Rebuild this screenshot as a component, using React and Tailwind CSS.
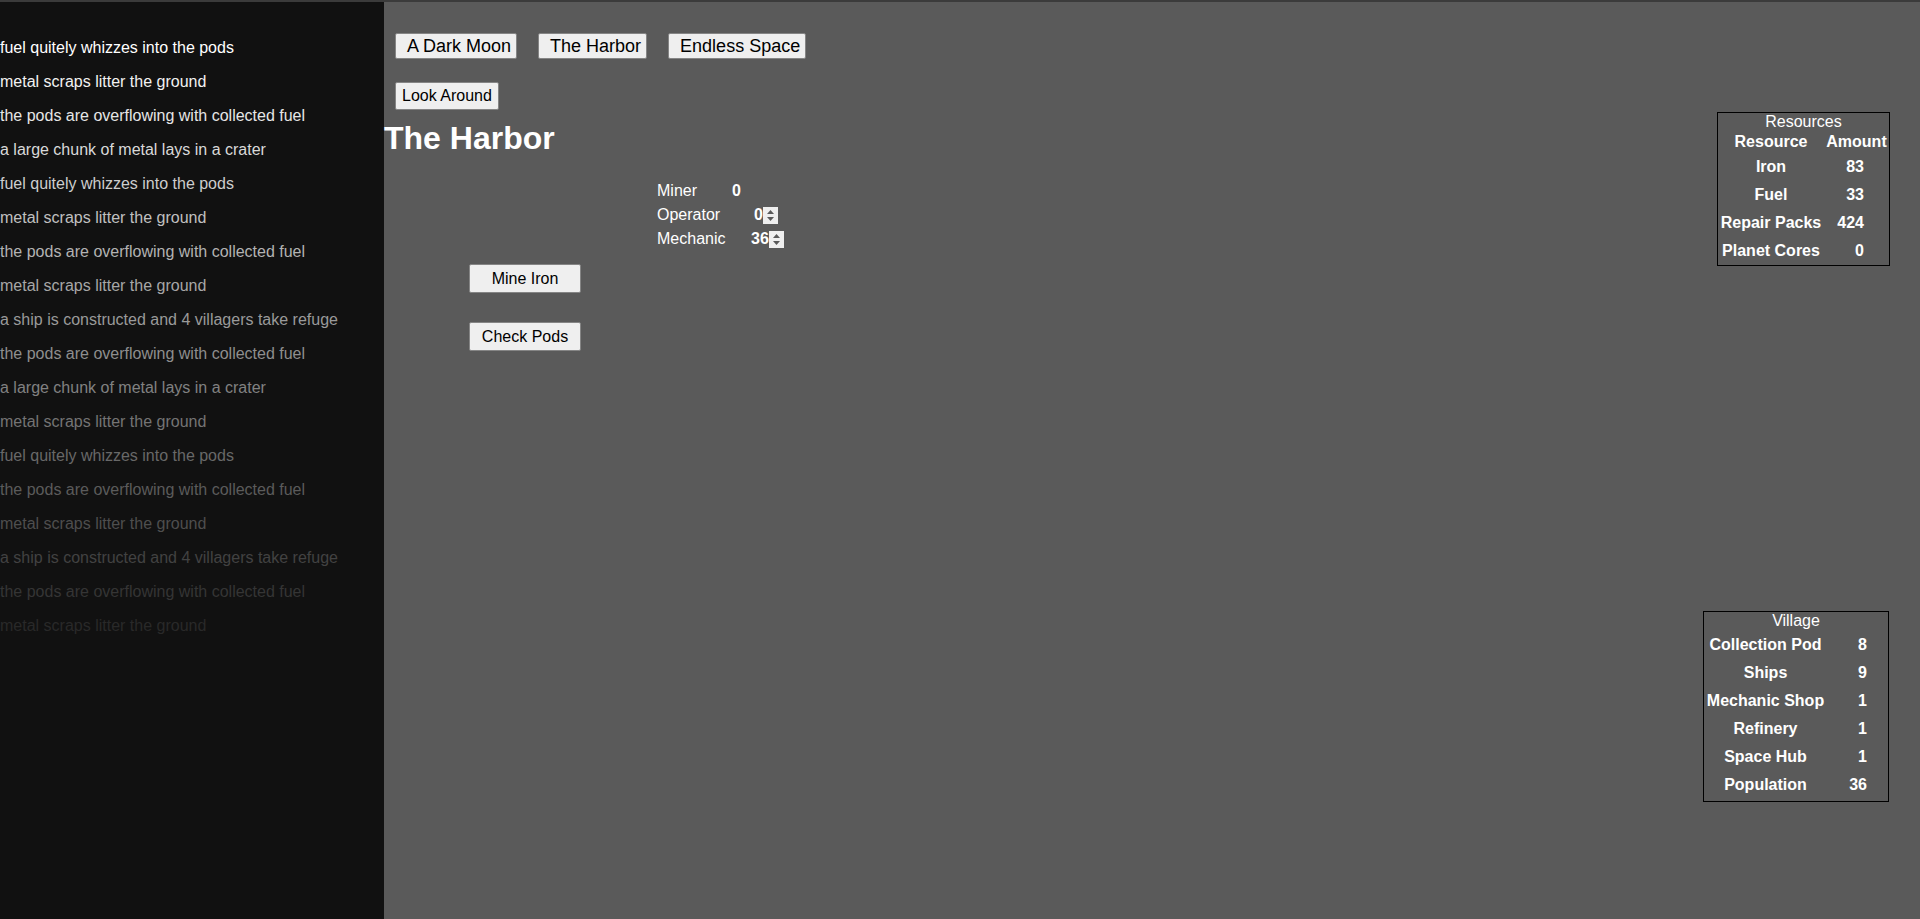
import React from "react";

const logLines = [
  { text: "fuel quitely whizzes into the pods", color: "text-[#ffffff]" },
  { text: "metal scraps litter the ground", color: "text-[#f2f2f2]" },
  { text: "the pods are overflowing with collected fuel", color: "text-[#e6e6e6]" },
  { text: "a large chunk of metal lays in a crater", color: "text-[#d9d9d9]" },
  { text: "fuel quitely whizzes into the pods", color: "text-[#cdcdcd]" },
  { text: "metal scraps litter the ground", color: "text-[#c0c0c0]" },
  { text: "the pods are overflowing with collected fuel", color: "text-[#b3b3b3]" },
  { text: "metal scraps litter the ground", color: "text-[#a7a7a7]" },
  { text: "a ship is constructed and 4 villagers take refuge", color: "text-[#9a9a9a]" },
  { text: "the pods are overflowing with collected fuel", color: "text-[#8e8e8e]" },
  { text: "a large chunk of metal lays in a crater", color: "text-[#818181]" },
  { text: "metal scraps litter the ground", color: "text-[#747474]" },
  { text: "fuel quitely whizzes into the pods", color: "text-[#686868]" },
  { text: "the pods are overflowing with collected fuel", color: "text-[#5b5b5b]" },
  { text: "metal scraps litter the ground", color: "text-[#4e4e4e]" },
  { text: "a ship is constructed and 4 villagers take refuge", color: "text-[#424242]" },
  { text: "the pods are overflowing with collected fuel", color: "text-[#353535]" },
  { text: "metal scraps litter the ground", color: "text-[#292929]" },
];

const resources = [
  ["Iron", "83"],
  ["Fuel", "33"],
  ["Repair Packs", "424"],
  ["Planet Cores", "0"],
];

const village = [
  ["Collection Pod", "8"],
  ["Ships", "9"],
  ["Mechanic Shop", "1"],
  ["Refinery", "1"],
  ["Space Hub", "1"],
  ["Population", "36"],
];

const Spinner = () => (
  <span className="flex flex-col items-center justify-center gap-[3px] w-[15px] h-[17px] bg-[#efefef]">
    <svg width="7" height="4" viewBox="0 0 7 4">
      <path d="M3.5 0 L7 4 L0 4 Z" fill="#5a5a5a" />
    </svg>
    <svg width="7" height="4" viewBox="0 0 7 4">
      <path d="M0 0 L7 0 L3.5 4 Z" fill="#5a5a5a" />
    </svg>
  </span>
);

const NavButton = ({ children }) => (
  <button className="h-[26px] pl-[11px] pr-[5px] text-[18px] leading-[20px] text-black bg-[#efefef] border border-[#858585] rounded-[2px]">
    {children}
  </button>
);

const ActionButton = ({ children }) => (
  <button className="w-[112px] h-[29px] text-[16px] leading-[18px] text-black bg-[#efefef] border border-[#858585] rounded-[2px]">
    {children}
  </button>
);

export default function App() {
  return (
    <div className="min-h-screen h-screen flex flex-col bg-[#5a5a5a] font-['Liberation_Sans',Arial,sans-serif] text-[16px] text-white overflow-hidden">
      {/* top strip */}
      <div className="h-[2px] bg-[#3b3b3b] shrink-0"></div>

      <div className="flex flex-1 min-h-0">
        {/* Event log */}
        <div className="w-[384px] shrink-0 bg-[#111111] pt-[37px] flex flex-col gap-[16px]">
          {logLines.map((line, i) => (
            <div key={i} className={`h-[18px] leading-[18px] whitespace-nowrap ${line.color}`}>
              {line.text}
            </div>
          ))}
        </div>

        {/* Main area */}
        <div className="flex-1 flex">
          <div className="flex-1 flex flex-col items-start">
            <div className="mt-[31px] ml-[11px] flex gap-[21px]">
              <NavButton>A Dark Moon</NavButton>
              <NavButton>The Harbor</NavButton>
              <NavButton>Endless Space</NavButton>
            </div>

            <button className="mt-[23px] ml-[11px] h-[28px] px-[6px] text-[16px] leading-[18px] text-black bg-[#efefef] border border-[#858585] rounded-[2px]">
              Look Around
            </button>

            <h1 className="mt-[10px] h-[37px] text-[32px] leading-[37px] font-bold">The Harbor</h1>

            {/* Workers */}
            <div className="mt-[22px] ml-[273px] flex flex-col">
              <div className="flex items-center h-[24px] leading-[24px]">
                <span className="w-[75px]">Miner</span>
                <span className="font-bold">0</span>
              </div>
              <div className="flex items-center h-[24px] leading-[24px]">
                <span className="w-[75px]">Operator</span>
                <span className="ml-[22px] font-bold">0</span>
                <Spinner />
              </div>
              <div className="flex items-center h-[24px] leading-[24px]">
                <span className="w-[75px]">Mechanic</span>
                <span className="ml-[19px] font-bold">36</span>
                <Spinner />
              </div>
            </div>

            <div className="mt-[13px] ml-[85px] flex flex-col gap-[29px]">
              <ActionButton>Mine Iron</ActionButton>
              <ActionButton>Check Pods</ActionButton>
            </div>
          </div>

          {/* Side tables */}
          <div className="flex flex-col items-end pr-[30px]">
            <div className="mt-[110px] w-[173px] border border-black pb-[5px]">
              <div className="h-[18px] leading-[18px] text-center">Resources</div>
              <div className="mt-[2px] flex h-[18px] leading-[18px] font-bold">
                <span className="w-[106px] text-center">Resource</span>
                <span className="flex-1 text-center">Amount</span>
              </div>
              <div className="mt-[7px] flex flex-col gap-[10px] font-bold">
                {resources.map(([name, amount]) => (
                  <div key={name} className="flex h-[18px] leading-[18px]">
                    <span className="w-[106px] text-center whitespace-nowrap">{name}</span>
                    <span className="flex-1 text-right pr-[25px]">{amount}</span>
                  </div>
                ))}
              </div>
            </div>

            <div className="mt-[345px] mr-[1px] w-[186px] border border-black pb-[7px]">
              <div className="h-[18px] leading-[18px] text-center">Village</div>
              <div className="mt-[6px] flex flex-col gap-[10px] font-bold">
                {village.map(([name, amount]) => (
                  <div key={name} className="flex h-[18px] leading-[18px]">
                    <span className="w-[123px] text-center whitespace-nowrap">{name}</span>
                    <span className="flex-1 text-right pr-[21px]">{amount}</span>
                  </div>
                ))}
              </div>
            </div>
          </div>
        </div>
      </div>
    </div>
  );
}
